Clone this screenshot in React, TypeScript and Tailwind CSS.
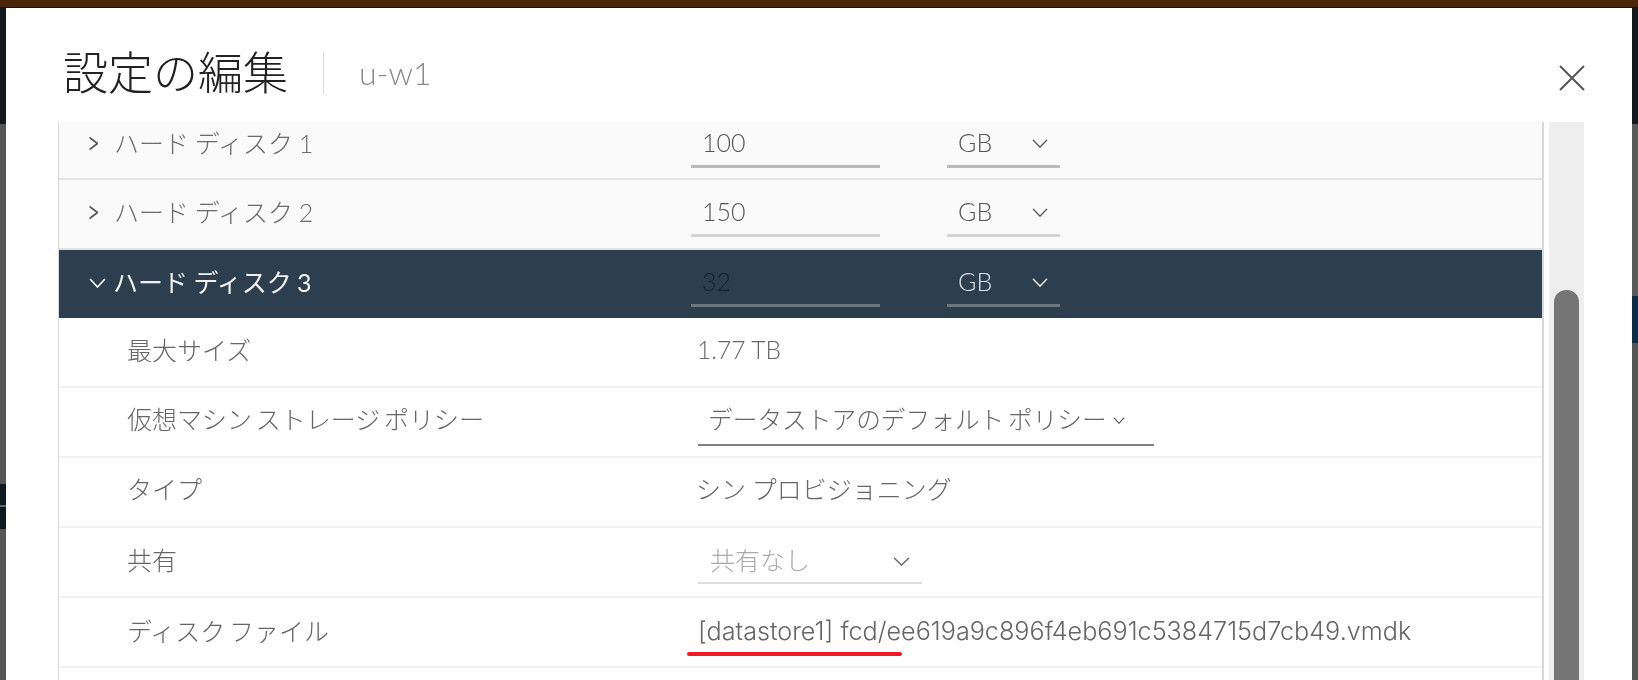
const Chevron = ({ dir = "down", className = "" }: { dir?: "down" | "right"; className?: string }) => (
  <svg viewBox="0 0 16 10" fill="none" stroke="currentColor" strokeWidth="1.5" preserveAspectRatio="none" className={className}>
    {dir === "down" ? <polyline points="1,1 8,9 15,1" /> : <polyline points="1,1 15,5 1,9" />}
  </svg>
);

const font = "font-['Lato','Noto_Sans_CJK_JP',sans-serif] font-light";

function Field({ value, unit, dark, faded }: { value: string; unit: string; dark?: boolean; faded?: boolean }) {
  const line = dark ? "border-[#6b7680]" : faded ? "border-[#d4d4d4]" : "border-[#bbbbbb]";
  return (
    <div className="flex items-center gap-[67px]">
      <div className={`w-[189px] h-[38px] border-b-[3px] ${line} pl-[11px] pb-[9px] flex items-center text-[25px] ${dark ? "text-[#17222b]" : "text-[#555]"}`}>{value}</div>
      <div className={`w-[113px] h-[38px] border-b-[3px] ${line} pl-[11px] pr-[12px] pb-[9px] flex items-center justify-between text-[25px] ${dark ? "text-[#dbe3e8]" : "text-[#555]"}`}>
        <span>{unit}</span>
        <Chevron className={`w-[16px] h-[9px] ${dark ? "text-white" : "text-[#555]"}`} />
      </div>
    </div>
  );
}

function DiskRow({ n, value, height, pad, dark, faded, open }: { n: string; value: string; height: string; pad: string; dark?: boolean; faded?: boolean; open?: boolean }) {
  return (
    <div className={`${height} ${pad} grid grid-cols-[632px_1fr] items-end ${dark ? "bg-[#2d3e4e]" : "bg-[#fafafa] border-b-2 border-[#e2e2e2]"}`}>
      <div className="h-[38px] pl-[30px] pb-[11px] flex items-center">
        <Chevron dir={open ? "down" : "right"} className={open ? "w-[17px] h-[10px] text-white" : "w-[9px] h-[15px] text-[#555]"} />
        <span className={`${open ? "ml-[7px] text-[#f0f0f0] font-normal" : "ml-[16px] text-[#6b6b6b]"} text-[25px] [word-spacing:-1px] whitespace-nowrap`}>ハード ディスク {n}</span>
      </div>
      <Field value={value} unit="GB" dark={dark} faded={faded} />
    </div>
  );
}

function InfoRow({ label, height, labelPad = "pb-[5px]", children }: { label: string; height: string; labelPad?: string; children: React.ReactNode }) {
  return (
    <div className={`${height} grid grid-cols-[639px_1fr] items-center border-b-2 border-[#f1f1f1] bg-white relative`}>
      <div className={`pl-[68px] ${labelPad} text-[25px] text-[#666] [word-spacing:-3px] whitespace-nowrap`}>{label}</div>
      {children}
    </div>
  );
}

const Seg = ({ h, bg }: { h: string; bg: string }) => <div className={`${h} ${bg}`} />;

export default function App() {
  return (
    <div className={`w-[1638px] h-[680px] overflow-hidden flex flex-col bg-[#555] ${font}`}>
      <div className="h-[8px] bg-[#4a2508] border-b border-[#1c120a] shrink-0" />
      <div className="flex flex-1 min-h-0">
        <div className="w-[6px] flex flex-col">
          <Seg h="h-[116px]" bg="bg-[#13191d]" />
          <Seg h="h-[360px]" bg="bg-[#565656]" />
          <Seg h="h-[21px]" bg="bg-[#0e1a20]" />
          <Seg h="h-[2px]" bg="bg-[#666]" />
          <Seg h="h-[22px]" bg="bg-[#0e1a20]" />
          <Seg h="flex-1" bg="bg-[#565656]" />
        </div>
        <div className="flex-1 bg-white flex flex-col min-w-0 blur-[0.35px]">
          <header className="h-[114px] shrink-0 pl-[57px] pr-[47px] pt-[44px] flex items-start">
            <h1 className="text-[45px] leading-[42px] font-light text-[#222] whitespace-nowrap">設定の編集</h1>
            <div className="ml-[35px] w-px h-[42px] bg-[#dddddd]" />
            <span className="ml-[35px] mt-[6px] text-[32px] leading-[30px] text-[#8a8a8a]">u-w1</span>
            <svg viewBox="0 0 26 26" fill="none" stroke="#555" strokeWidth="2" className="ml-auto mt-[13px] w-[26px] h-[26px]">
              <path d="M1 1 L25 25 M25 1 L1 25" />
            </svg>
          </header>
          <div className="flex flex-1 min-h-0 pl-[52px] pr-[48px]">
            <div className="flex-1 min-w-0 border-l border-r-2 border-[#d8d8d8] flex flex-col">
              <DiskRow n="1" value="100" height="h-[58px] shrink-0" pad="pb-[10px]" />
              <DiskRow n="2" value="150" height="h-[70px] shrink-0" pad="pb-[11px]" faded />
              <DiskRow n="3" value="32" height="h-[68px] shrink-0" pad="pb-[11px]" dark open />
              <InfoRow label="最大サイズ" height="h-[70px] shrink-0" labelPad="pb-[3px]">
                <div className="-ml-px pb-[3px] text-[24.5px] text-[#666]">1.77 TB</div>
              </InfoRow>
              <InfoRow label="仮想マシン ストレージ ポリシー" height="h-[70px] shrink-0">
                <div className="w-[456px] h-[46px] mt-[2px] border-b-2 border-[#808080] pl-[10px] pb-[4px] flex items-center text-[24.7px] text-[#666] [word-spacing:-3px] whitespace-nowrap">
                  データストアのデフォルト ポリシー
                  <Chevron className="ml-[6px] w-[12px] h-[7px] text-[#555]" />
                </div>
              </InfoRow>
              <InfoRow label="タイプ" height="h-[70px] shrink-0">
                <div className="-ml-[2px] pb-[4px] text-[25px] text-[#666] [word-spacing:-1px] whitespace-nowrap">シン プロビジョニング</div>
              </InfoRow>
              <InfoRow label="共有" height="h-[70px] shrink-0" labelPad="pb-[3px]">
                <div className="w-[224px] h-[42px] mt-[2px] border-b-[2px] border-[#dddddd] pl-[12px] pr-[12px] pb-[2px] flex items-center justify-between text-[25px] text-[#aaaaaa]">
                  <span>共有なし</span>
                  <Chevron className="w-[17px] h-[9px] text-[#666]" />
                </div>
              </InfoRow>
              <InfoRow label="ディスク ファイル" height="h-[70px] shrink-0" labelPad="pb-[1px]">
                <div className="pb-[1px] text-[25.2px] font-['Inter'] font-light text-[#666] whitespace-nowrap">[datastore1] fcd/ee619a9c896f4eb691c5384715d7cb49.vmdk</div>
                <div className="absolute left-[628px] top-[54px] w-[215px] h-[4px] rounded-full bg-[#ed1c24]" />
              </InfoRow>
              <div className="flex-1 bg-white" />
            </div>
            <div className="ml-[5px] w-[35px] bg-[#eeeeee] px-[5px] pt-[168px] flex">
              <div className="flex-1 bg-[#757575] rounded-t-[12px]" />
            </div>
          </div>
        </div>
        <div className="w-[6px] flex flex-col">
          <Seg h="h-[116px]" bg="bg-[#13191d]" />
          <Seg h="h-[172px]" bg="bg-[#5a5a5a]" />
          <Seg h="h-[47px]" bg="bg-[#0d2d45]" />
          <Seg h="flex-1" bg="bg-[#555]" />
        </div>
      </div>
    </div>
  );
}
